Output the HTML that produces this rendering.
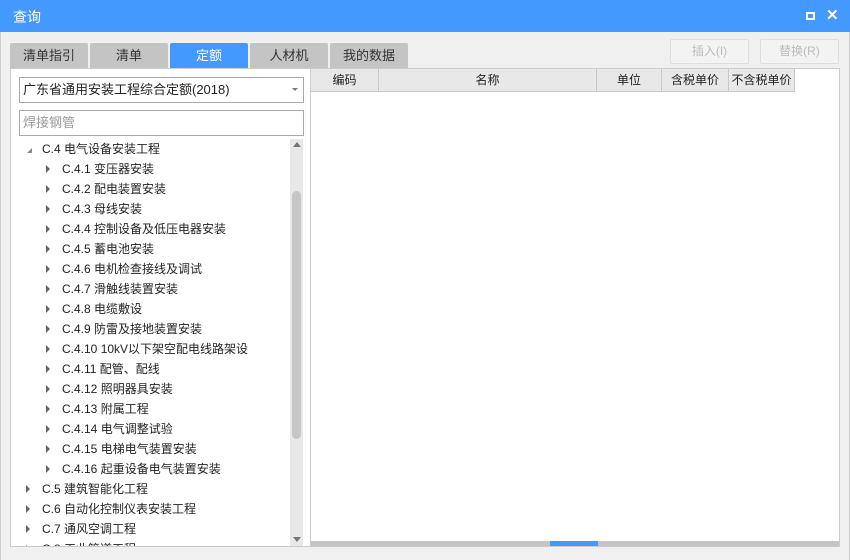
<!DOCTYPE html>
<html><head><meta charset="utf-8"><style>
*{margin:0;padding:0;box-sizing:border-box}
body{width:850px;height:560px;overflow:hidden;background:#f0f0f0;font-family:"Liberation Sans","Noto Sans CJK SC",sans-serif;font-size:12px;color:#222;position:relative}
.a{position:absolute}
.title{left:0;top:0;width:850px;height:32px;background:#4499ff;color:#fff;font-size:14px;line-height:34px;padding-left:13px}
.tab{top:43px;height:25px;width:78px;background:#c4c4c4;text-align:center;line-height:25px;font-size:13px;border-radius:2px 2px 0 0;color:#333}
.btn{top:39px;width:79px;height:25px;border:1px solid #ddd;border-radius:2px;color:#bbb;text-align:center;line-height:23px;background:#f3f3f3}
.row{left:0;height:20px;line-height:20px;font-size:12px;white-space:nowrap}
.tri{display:inline-block;width:0;height:0;border-top:4px solid transparent;border-bottom:4px solid transparent;border-left:4px solid #666;margin-right:12px;vertical-align:0}
.hd{top:0;height:23px;border-right:1px solid #c8c8c8;border-bottom:1px solid #c8c8c8;background:#e8e8e8;text-align:center;line-height:23px;font-size:12px}
</style></head><body>
<div class="a title">查询
<div class="a" style="left:806px;top:12px;width:9px;height:8px;border:2px solid #fff"></div>
<div class="a" style="left:826px;top:6px;font-size:15px;line-height:20px;font-weight:bold">✕</div>
</div>
<div class="a" style="left:0;top:32px;width:1px;height:528px;background:#ccc"></div>
<div class="a" style="right:0;top:32px;width:1px;height:528px;background:#ccc"></div>
<div class="a tab" style="left:10px">清单指引</div>
<div class="a tab" style="left:90px">清单</div>
<div class="a tab" style="left:170px;background:#4499ff;color:#fff">定额</div>
<div class="a tab" style="left:250px">人材机</div>
<div class="a tab" style="left:330px">我的数据</div>
<div class="a btn" style="left:670px">插入(I)</div>
<div class="a btn" style="left:760px">替换(R)</div>

<div class="a" style="left:10px;top:68px;width:301px;height:479px;background:#fff;border:1px solid #ccc"></div>
<div class="a" style="left:19px;top:77px;width:285px;height:26px;border:1px solid #aaa;background:#fff;line-height:24px;padding-left:3px;font-size:13px">广东省通用安装工程综合定额(2018)
<div class="a" style="right:5px;top:10px;border-left:3px solid transparent;border-right:3px solid transparent;border-top:3px solid #777"></div></div>
<div class="a" style="left:19px;top:110px;width:285px;height:26px;border:1px solid #aaa;background:#fff;line-height:24px;padding-left:3px;font-size:13px;color:#999">焊接钢管</div>
<div class="a" style="left:290px;top:139px;width:13px;height:407px;background:#e8e8e8">
<div class="a" style="left:3px;top:3px;border-left:4px solid transparent;border-right:4px solid transparent;border-bottom:5px solid #777"></div>
<div class="a" style="left:2px;top:52px;width:9px;height:248px;background:#c6c6c6;border-radius:5px"></div>
<div class="a" style="left:3px;top:398px;border-left:4px solid transparent;border-right:4px solid transparent;border-top:5px solid #777"></div>
</div>
<div class="a" style="left:11px;top:139px;width:279px;height:407px;overflow:hidden">
<div class="a row" style="top:0;left:16px"><span class="tri" style="border:0;border-bottom:5px solid #888;border-left:5px solid transparent;margin-right:10px"></span>C.4 电气设备安装工程</div>
<div class="a row" style="top:20px;left:35px"><span class="tri"></span>C.4.1 变压器安装</div>
<div class="a row" style="top:40px;left:35px"><span class="tri"></span>C.4.2 配电装置安装</div>
<div class="a row" style="top:60px;left:35px"><span class="tri"></span>C.4.3 母线安装</div>
<div class="a row" style="top:80px;left:35px"><span class="tri"></span>C.4.4 控制设备及低压电器安装</div>
<div class="a row" style="top:100px;left:35px"><span class="tri"></span>C.4.5 蓄电池安装</div>
<div class="a row" style="top:120px;left:35px"><span class="tri"></span>C.4.6 电机检查接线及调试</div>
<div class="a row" style="top:140px;left:35px"><span class="tri"></span>C.4.7 滑触线装置安装</div>
<div class="a row" style="top:160px;left:35px"><span class="tri"></span>C.4.8 电缆敷设</div>
<div class="a row" style="top:180px;left:35px"><span class="tri"></span>C.4.9 防雷及接地装置安装</div>
<div class="a row" style="top:200px;left:35px"><span class="tri"></span>C.4.10 10kV以下架空配电线路架设</div>
<div class="a row" style="top:220px;left:35px"><span class="tri"></span>C.4.11 配管、配线</div>
<div class="a row" style="top:240px;left:35px"><span class="tri"></span>C.4.12 照明器具安装</div>
<div class="a row" style="top:260px;left:35px"><span class="tri"></span>C.4.13 附属工程</div>
<div class="a row" style="top:280px;left:35px"><span class="tri"></span>C.4.14 电气调整试验</div>
<div class="a row" style="top:300px;left:35px"><span class="tri"></span>C.4.15 电梯电气装置安装</div>
<div class="a row" style="top:320px;left:35px"><span class="tri"></span>C.4.16 起重设备电气装置安装</div>
<div class="a row" style="top:340px;left:15px"><span class="tri"></span>C.5 建筑智能化工程</div>
<div class="a row" style="top:360px;left:15px"><span class="tri"></span>C.6 自动化控制仪表安装工程</div>
<div class="a row" style="top:380px;left:15px"><span class="tri"></span>C.7 通风空调工程</div>
<div class="a row" style="top:400px;left:15px"><span class="tri"></span>C.8 工业管道工程</div>
</div>

<div class="a" style="left:310px;top:68px;width:530px;height:479px;background:#fff;border:1px solid #ccc">
<div class="a hd" style="left:0;width:68px">编码</div>
<div class="a hd" style="left:68px;width:218px">名称</div>
<div class="a hd" style="left:286px;width:65px">单位</div>
<div class="a hd" style="left:351px;width:67px">含税单价</div>
<div class="a hd" style="left:418px;width:66px">不含税单价</div>
<div class="a" style="left:0;bottom:0;width:528px;height:5px;background:#c4c4c4"></div>
<div class="a" style="left:239px;bottom:0;width:48px;height:5px;background:#4499ff"></div>
</div>
</body></html>
